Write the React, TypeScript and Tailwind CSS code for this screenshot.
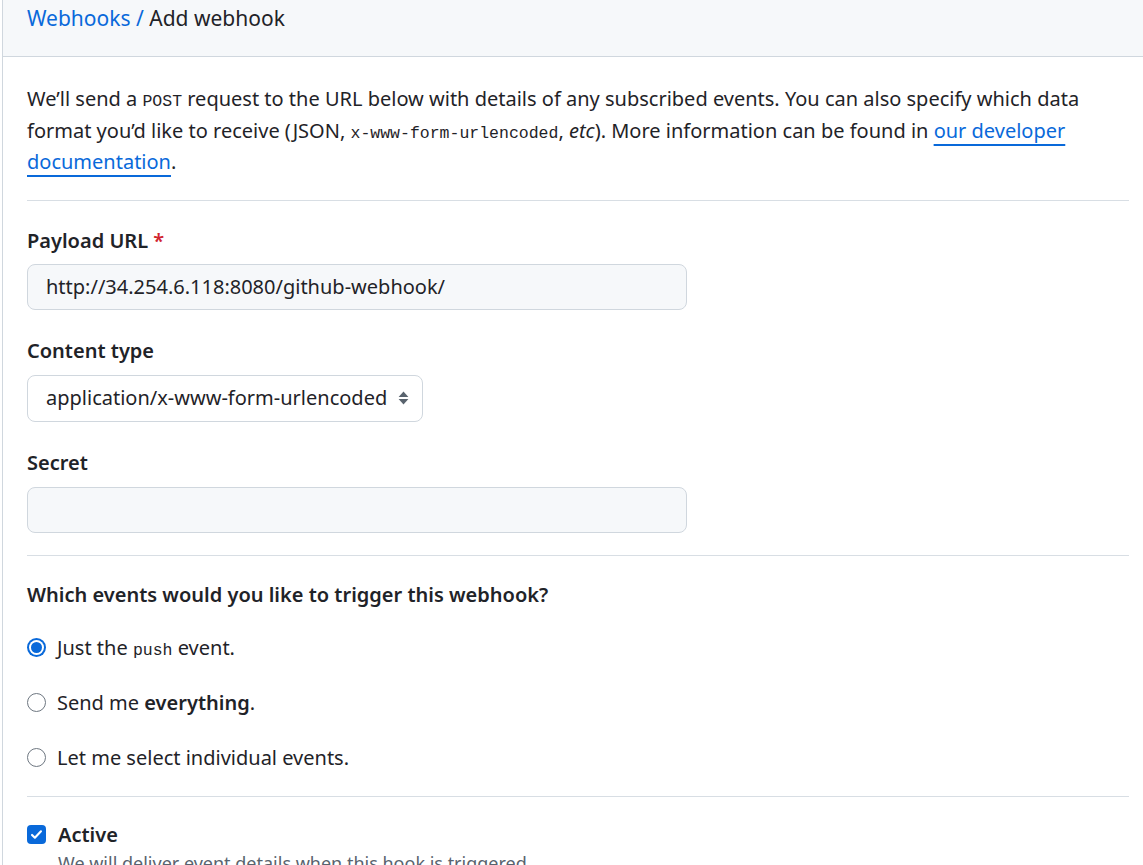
import React from "react";

const sans = { fontFamily: '"Noto Sans", "Open Sans", Arial, sans-serif' };

function Radio({ checked }: { checked?: boolean }) {
  if (checked) {
    return (
      <span className="flex h-[19px] w-[19px] shrink-0 items-center justify-center rounded-full bg-[#0969da]">
        <span className="flex h-[15px] w-[15px] items-center justify-center rounded-full bg-white">
          <span className="h-[11px] w-[11px] rounded-full bg-[#0969da]" />
        </span>
      </span>
    );
  }
  return <span className="h-[19px] w-[19px] shrink-0 rounded-full border-[1.5px] border-[#6e7781] bg-white" />;
}

function Checkbox() {
  return (
    <span className="flex h-[19px] w-[19px] shrink-0 items-center justify-center rounded-[4px] bg-[#0969da]">
      <svg width="13" height="13" viewBox="0 0 16 16" fill="none">
        <path d="M2.5 8.5l3.5 3.5 7.5-8" stroke="white" strokeWidth="2.6" strokeLinecap="round" strokeLinejoin="round" />
      </svg>
    </span>
  );
}

const mono = "font-['Liberation_Mono','DejaVu_Sans_Mono',monospace] text-[16.5px] leading-none";

export default function App() {
  return (
    <div className="min-h-[865px] bg-white text-[#1f2328]" style={sans}>
      <div className="ml-[2px] border-l border-[#d0d7de]">
        {/* cabeçalho */}
        <div className="h-[57px] border-b border-[#d0d7de] bg-[#f6f8fa] pl-[24px] pt-[4px] text-[21px] leading-[28px]">
          <a className="text-[#0969da]">Webhooks</a>
          <span className="text-[#0969da]"> / </span>
          <span>Add webhook</span>
        </div>

        <div className="pl-[24px] pr-[14px]">
          <p className="mt-[26px] text-[20px] leading-[31.5px]">
            We’ll send a <code className={mono}>POST</code> request to the URL below with details of any subscribed
            events. You can also specify which data format you’d like to receive (JSON,{" "}
            <code className={mono}>x-www-form-urlencoded</code>, <em>etc</em>). More information can be found in{" "}
            <a className="text-[#0969da] underline decoration-[#0969da] decoration-2 underline-offset-[6px]">
              our developer documentation
            </a>
            .
          </p>

          <div className="mt-[22px] border-t border-[#d8dee4]" />

          <div className="mt-[26px] text-[20px] font-semibold leading-[28px]">
            Payload URL <span className="text-[#d1242f]">*</span>
          </div>
          <div className="mt-[9px] flex h-[46px] w-[660px] items-center rounded-[8px] border border-[#d0d7de] bg-[#f6f8fa] px-[18px] text-[20px]">
            http://34.254.6.118:8080/github-webhook/
          </div>

          <div className="mt-[27px] text-[20px] font-semibold leading-[28px]">Content type</div>
          <div className="mt-[10px] flex h-[47px] w-[396px] items-center justify-between rounded-[8px] border border-[#d0d7de] bg-white pl-[18px] pr-[12px] text-[20px]">
            <span>application/x-www-form-urlencoded</span>
            <svg width="13" height="18" viewBox="0 0 12 16" fill="#59636e">
              <path d="M6 2l4.5 5h-9z" />
              <path d="M6 14l4.5-5h-9z" />
            </svg>
          </div>

          <div className="mt-[27px] text-[20px] font-semibold leading-[28px]">Secret</div>
          <div className="mt-[10px] h-[46px] w-[660px] rounded-[8px] border border-[#d0d7de] bg-[#f6f8fa]" />

          <div className="mt-[22px] border-t border-[#d8dee4]" />

          <div className="mt-[25px] text-[20px] font-semibold leading-[28px]">
            Which events would you like to trigger this webhook?
          </div>

          <div className="mt-[25px] flex flex-col gap-[27px] text-[20px] leading-[28px]">
            <label className="flex items-center gap-[11px]">
              <Radio checked />
              <span>
                Just the <code className={mono}>push</code> event.
              </span>
            </label>
            <label className="flex items-center gap-[11px]">
              <Radio />
              <span>
                Send me <strong className="font-semibold">everything</strong>.
              </span>
            </label>
            <label className="flex items-center gap-[11px]">
              <Radio />
              <span>Let me select individual events.</span>
            </label>
          </div>

          <div className="mt-[24px] border-t border-[#d8dee4]" />

          <label className="mt-[24px] flex items-center gap-[12px] text-[20px] font-semibold leading-[28px]">
            <Checkbox />
            <span>Active</span>
          </label>
          <p className="ml-[31px] mt-[1px] text-[18px] leading-[26px] text-[#59636e]">
            We will deliver event details when this hook is triggered.
          </p>
        </div>
      </div>
    </div>
  );
}
